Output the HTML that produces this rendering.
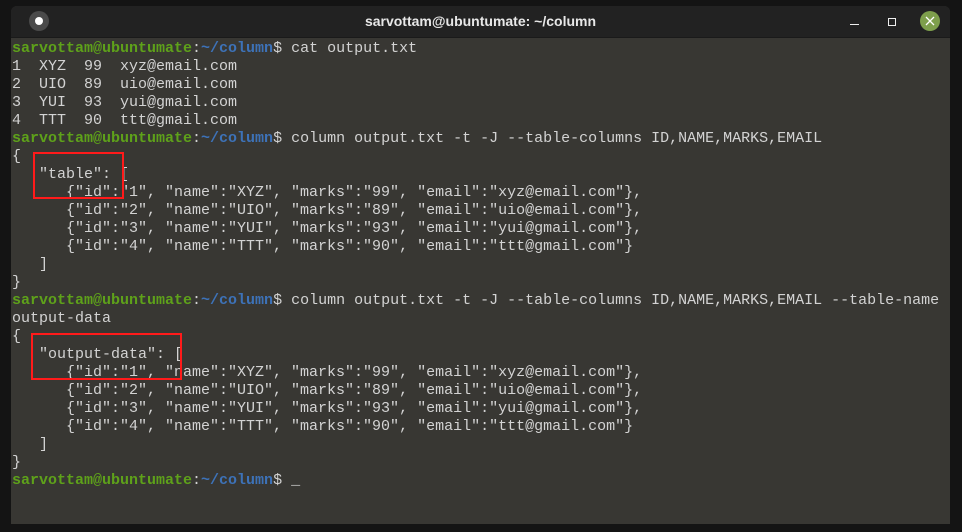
<!DOCTYPE html>
<html><head><style>
body{margin:0;width:962px;height:532px;background:#141414;position:relative;overflow:hidden;font-family:"Liberation Sans",sans-serif}
.win{position:absolute;left:11px;top:6px;width:939px;height:518px;background:#383733;border-radius:6px 6px 0 0;overflow:hidden}
.tb{position:absolute;left:0;top:0;width:100%;height:31px;background:#222222;border-bottom:1px solid #1a1a1a}
.title{position:absolute;left:0;right:0;top:7px;text-align:center;color:#e8e8e8;font-weight:bold;font-size:14px}
pre{position:absolute;left:1px;top:34px;margin:0;font-family:"Liberation Mono",monospace;font-size:15px;line-height:18px;color:#d3d3d3;letter-spacing:0}
.g{color:#5ea11a;font-weight:bold}.b{color:#3d72b8;font-weight:bold}
.box{position:absolute;border:2px solid #ff1a1a}
</style></head><body>
<div class="win">
<div class="tb">
<div style="position:absolute;left:18px;top:5px;width:20px;height:20px;border-radius:50%;background:#4a4a4a"></div>
<div style="position:absolute;left:24px;top:11px;width:8px;height:8px;border-radius:50%;background:#fff"></div>
<div class="title">sarvottam@ubuntumate: ~/column</div>
<div style="position:absolute;left:839px;top:18px;width:9px;height:1px;background:#eee"></div>
<div style="position:absolute;left:877px;top:12px;width:6px;height:6px;border:1px solid #eee"></div>
<div style="position:absolute;left:909px;top:5px;width:20px;height:20px;border-radius:50%;background:#7e9f4c"></div>
<svg style="position:absolute;left:913px;top:9px" width="12" height="12"><path d="M2 2L10 10M10 2L2 10" stroke="#fff" stroke-width="1.3"/></svg>
</div>
<pre><span class="g">sarvottam@ubuntumate</span>:<span class="b">~/column</span>$ cat output.txt
1  XYZ  99  xyz@email.com
2  UIO  89  uio@email.com
3  YUI  93  yui@gmail.com
4  TTT  90  ttt@gmail.com
<span class="g">sarvottam@ubuntumate</span>:<span class="b">~/column</span>$ column output.txt -t -J --table-columns ID,NAME,MARKS,EMAIL
{
   "table": [
      {"id":"1", "name":"XYZ", "marks":"99", "email":"xyz@email.com"},
      {"id":"2", "name":"UIO", "marks":"89", "email":"uio@email.com"},
      {"id":"3", "name":"YUI", "marks":"93", "email":"yui@gmail.com"},
      {"id":"4", "name":"TTT", "marks":"90", "email":"ttt@gmail.com"}
   ]
}
<span class="g">sarvottam@ubuntumate</span>:<span class="b">~/column</span>$ column output.txt -t -J --table-columns ID,NAME,MARKS,EMAIL --table-name
output-data
{
   "output-data": [
      {"id":"1", "name":"XYZ", "marks":"99", "email":"xyz@email.com"},
      {"id":"2", "name":"UIO", "marks":"89", "email":"uio@email.com"},
      {"id":"3", "name":"YUI", "marks":"93", "email":"yui@gmail.com"},
      {"id":"4", "name":"TTT", "marks":"90", "email":"ttt@gmail.com"}
   ]
}
<span class="g">sarvottam@ubuntumate</span>:<span class="b">~/column</span>$ _</pre>
</div>
<div class="box" style="left:33px;top:152px;width:87px;height:43px"></div>
<div class="box" style="left:31px;top:333px;width:147px;height:43px"></div>
</body></html>
